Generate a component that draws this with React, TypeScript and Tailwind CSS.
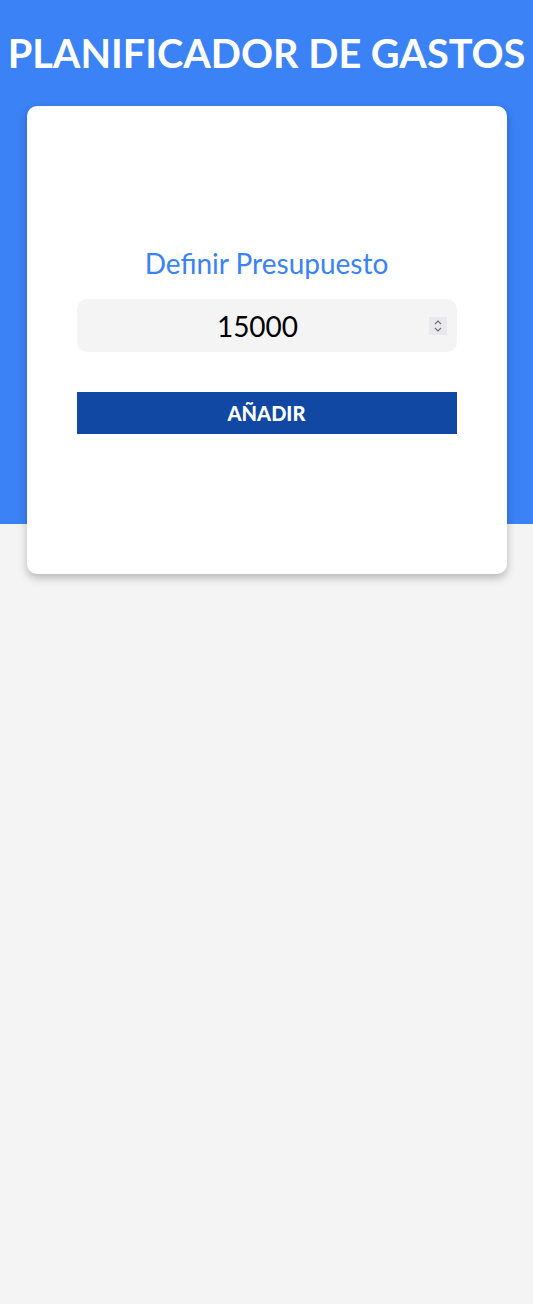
import React from "react";

export default function App() {
  return (
    <div className="min-h-screen bg-[#f4f4f4]" style={{ fontFamily: "Lato, 'Open Sans', sans-serif" }}>
      <header className="bg-[#3b82f6] h-[524px] pt-[26px] flex flex-col items-center">
        <h1 className="text-white font-bold text-[39.7px] leading-[54px] text-center whitespace-nowrap">
          PLANIFICADOR DE GASTOS
        </h1>
        <div className="mt-[26px] w-[480px] h-[468px] shrink-0 bg-white rounded-[10px] shadow-[0_4px_8px_rgba(0,0,0,0.25)] px-[50px] flex flex-col justify-center">
          <form className="flex flex-col">
            <label className="text-[#3b82f6] text-[28px] leading-[34px] text-center">Definir Presupuesto</label>
            <div className="relative mt-[19px]">
              <input
                type="text"
                defaultValue="15000"
                className="w-full h-[53px] bg-[#f4f4f4] rounded-[10px] pr-[18px] text-center text-[28px] text-black outline-none"
                style={{ fontFamily: "Lato, sans-serif" }}
              />
              <span className="absolute right-[10px] top-[18px] w-[18px] h-[18px] bg-[#e9e9ed] flex items-center justify-center">
                <svg width="10" height="14" viewBox="0 0 10 14" fill="none" stroke="#6f6f78" strokeWidth="1.2">
                  <path d="M2 5 L5 2 L8 5" />
                  <path d="M2 9 L5 12 L8 9" />
                </svg>
              </span>
            </div>
            <button
              type="button"
              className="mt-[40px] h-[42px] w-full bg-[#1048a4] text-white font-black text-[20px] uppercase"
            >
              Añadir
            </button>
          </form>
        </div>
      </header>
    </div>
  );
}
